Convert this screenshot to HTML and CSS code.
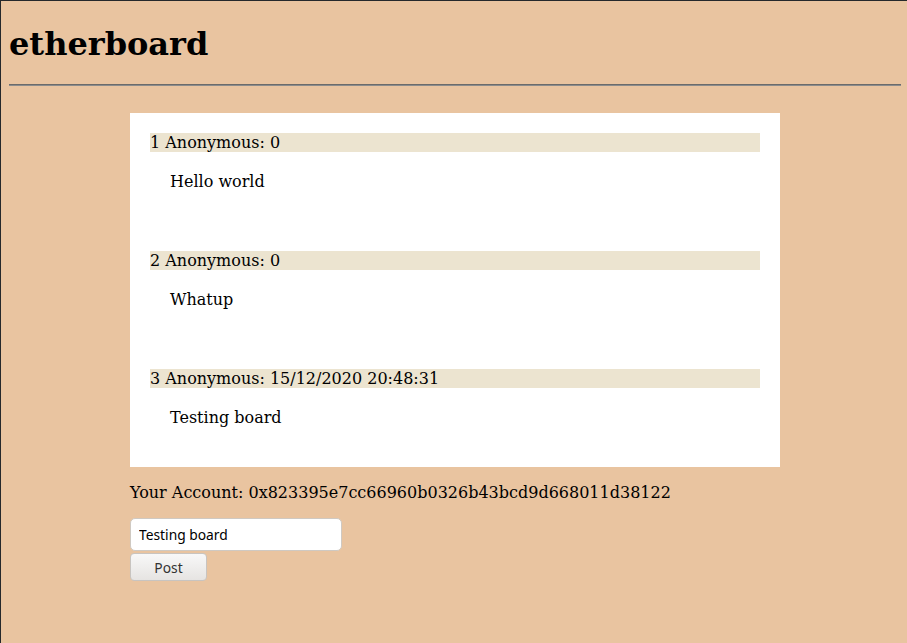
FILE: index.html
```html
<!DOCTYPE html>
<html>
<head>
<meta charset="utf-8">
<title>etherboard</title>
<link rel="stylesheet" href="styles.css">
</head>
<body>
<h1 class="title">etherboard</h1>
<hr class="rule">
<main class="board">
  <section class="posts">
    <article class="post">
      <div class="post-head">1 Anonymous: 0</div>
      <div class="post-body">Hello world</div>
    </article>
    <article class="post">
      <div class="post-head">2 Anonymous: 0</div>
      <div class="post-body">Whatup</div>
    </article>
    <article class="post">
      <div class="post-head">3 Anonymous: 15/12/2020 20:48:31</div>
      <div class="post-body">Testing board</div>
    </article>
  </section>
  <p class="account">Your Account: 0x823395e7cc66960b0326b43bcd9d668011d38122</p>
  <form class="compose">
    <input class="compose-input" type="text" value="Testing board">
    <button class="compose-btn" type="button">Post</button>
  </form>
</main>
</body>
</html>
```
FILE: styles.css
```css
html {
  border-top: 1px solid #25282b;
  border-left: 1px solid #25282b;
  background: #e9c4a0;
  min-height: 100%;
  box-sizing: border-box;
}
body {
  margin: 8px 6px 8px 8px;
  font-family: "DejaVu Serif", serif;
  font-size: 16px;
  color: #000;
}
.title {
  font-size: 32px;
  font-weight: bold;
  margin: 16px 0 21px;
}
.rule {
  margin: 0;
  border: none;
  border-top: 1px solid #6b6b6b;
  border-bottom: 1px solid #8c8c8c;
  height: 0;
}
.board {
  width: 650px;
  margin: 27px auto 0;
}
.posts {
  background: #fff;
  padding: 20px;
}
.post + .post {
  margin-top: 40px;
}
.post-head {
  background: #ece4d0;
  line-height: 19px;
}
.post-body {
  padding: 20px;
  line-height: 19px;
}
.account {
  margin: 16px 0;
  line-height: 19px;
}
.compose {
  display: flex;
  flex-direction: column;
  align-items: flex-start;
  gap: 2px;
}
.compose-input {
  width: 212px;
  height: 33px;
  box-sizing: border-box;
  border: 1px solid #cfc9c2;
  border-radius: 5px;
  background: #fff;
  padding: 0 8px;
  font-family: "Noto Sans", sans-serif;
  font-size: 13.8px;
  color: #000;
  margin: 0;
}
.compose-btn {
  width: 77px;
  height: 28px;
  box-sizing: border-box;
  border: 1px solid #c8c4c0;
  border-radius: 4px;
  background: linear-gradient(#f8f8f8, #e6e4e2);
  font-family: "Noto Sans", sans-serif;
  font-size: 13.8px;
  color: #333;
  margin: 0;
  padding: 0;
}
```
